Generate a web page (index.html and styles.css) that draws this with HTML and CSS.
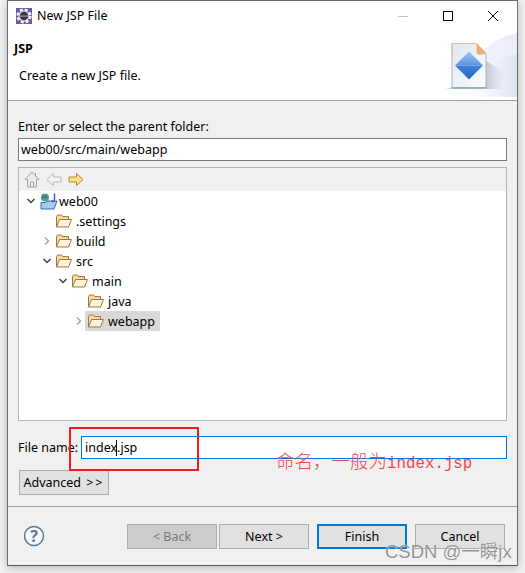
FILE: index.html
```html
<!DOCTYPE html>
<html lang="en">
<head>
    <meta charset="UTF-8">
    <title>New JSP File</title>
    <link rel="stylesheet" href="styles.css">
</head>
<body>
    <div class="window">
        <div class="titlebar">
            <svg class="appIcon" width="16" height="16" viewBox="0 0 16 16">
                <rect width="16" height="16" fill="#6c5c9e"/>
                <circle cx="8" cy="8" r="6.300" fill="none" stroke="#f2f2f2" stroke-width="2.600" stroke-dasharray="3 1.950"/>
                <circle cx="8" cy="8" r="5.400" fill="#f2f2f2"/>
                <circle cx="8" cy="8" r="4.400" fill="#3a3648"/>
                <rect x="3.800" y="7.400" width="8.400" height="1.400" fill="#8d88a8"/>
            </svg>
            <span class="titleText">New JSP File</span>
            <div class="winBtns">
                <svg width="10" height="10" viewBox="0 0 10 10"><path d="M0 5.500h10" stroke="#c4c4c4"/></svg>
                <svg width="10" height="10" viewBox="0 0 10 10"><rect x=".5" y=".5" width="9" height="9" fill="none" stroke="#000"/></svg>
                <svg width="10" height="10" viewBox="0 0 10 10"><path d="M0 0l10 10M10 0L0 10" stroke="#000" stroke-width="1"/></svg>
            </div>
        </div>
        <div class="banner">
            <div class="bannerText">
                <div class="bannerTitle">JSP</div>
                <div class="bannerDesc">Create a new JSP file.</div>
            </div>
            <svg class="bannerArt" width="75" height="68" viewBox="0 0 75 68">
                <defs>
                    <linearGradient id="wash" x1="0" y1="1" x2="1" y2="0">
                        <stop offset="0" stop-color="#fff"/>
                        <stop offset="1" stop-color="#e6ebf8"/>
                    </linearGradient>
                    <linearGradient id="wash2" x1="0" y1="0" x2="1" y2="0">
                        <stop offset="0" stop-color="#fff" stop-opacity="0"/>
                        <stop offset="1" stop-color="#dde4f5"/>
                    </linearGradient>
                    <linearGradient id="sheet" x1="0" y1="0" x2="1" y2="1">
                        <stop offset="0" stop-color="#dde7f3"/>
                        <stop offset="1" stop-color="#fbfcfe"/>
                    </linearGradient>
                    <linearGradient id="gemTop" x1="0" y1="0" x2="0" y2="1">
                        <stop offset="0" stop-color="#a4c6ee"/>
                        <stop offset="1" stop-color="#5b94e0"/>
                    </linearGradient>
                    <linearGradient id="gemBottom" x1="0" y1="0" x2="0" y2="1">
                        <stop offset="0" stop-color="#3f80dc"/>
                        <stop offset="1" stop-color="#2468c4"/>
                    </linearGradient>
                    <linearGradient id="shadow" x1="0" y1="0" x2="1" y2="0">
                        <stop offset="0" stop-color="#c8c4d2"/>
                        <stop offset="1" stop-color="#e2e2ee" stop-opacity=".4"/>
                    </linearGradient>
                </defs>
                <path d="M75 2C52 6 28 26 8 66h67z" fill="url(#wash)"/>
                <path d="M75 23C58 26 40 40 26 66h49z" fill="url(#wash2)"/>
                <path d="M3 58l8-2h33v2z" fill="#dcdce4"/>
                <path d="M44 30l17 10v18H44z" fill="url(#shadow)"/>
                <path d="M10 12.500h24.500l9.500 10v34H10z" fill="url(#sheet)" stroke="#a8bcbe"/>
                <path d="M10 12.500h25M10 12v12" stroke="#eabf86" stroke-width="1" fill="none"/>
                <path d="M9.500 57h35" stroke="#8fa9ac" stroke-width="1.500"/>
                <path d="M34.500 12l9.500 10.500-7 1.500-2.500-2z" fill="#eeb068"/>
                <path d="M13 34.500h28L27 48.500z" fill="url(#gemBottom)"/>
                <path d="M27 20.500l14 14H13z" fill="url(#gemTop)"/>
            </svg>
        </div>
        <div class="content">
            <div class="parentLabel">Enter or select the parent folder:</div>
            <div class="textBox">web00/src/main/webapp</div>
            <div class="treeBox">
                <div class="treeTools">
                    <svg width="16" height="17" viewBox="0 0 16 17"><path d="M8 1L1 8.500h2.500V16h9V8.500H15zM6.500 16v-5h3v5M11.500 2v3.500" fill="#ebebeb" stroke="#a4a4a4"/></svg>
                    <svg width="16" height="15" viewBox="0 0 16 15"><path d="M7.500 1.500L1 7.500l6.500 6v-3.500h7.500V5H7.500z" fill="#f4f4f4" stroke="#b8b8b8"/></svg>
                    <svg width="16" height="15" viewBox="0 0 16 15"><path d="M8.500 1.500l6.500 6-6.500 6v-3.500H1V5h7.500z" fill="#f9e08a" stroke="#b08a24"/></svg>
                </div>
                <ul class="tree">
                    <li class="row depth0">
                        <svg class="twisty" viewBox="0 0 10 10"><path d="M1.500 3L5 6.500 8.500 3" class="twistyOpen"/></svg>
                        <svg class="projIcon" width="18" height="17" viewBox="0 0 18 17">
                            <path d="M1 9.500h5l1-1.500h10l-3 8H1z" fill="#a9cdf0" stroke="#2f6db0"/>
                            <circle cx="5" cy="4.500" r="4" fill="#5aa070"/>
                            <path d="M2 2.500h5l1 2.500H4l-1.500 1z" fill="#3f76c4"/>
                            <path d="M14.500 .5v6.500c0 1.500-2 2-3 .800" fill="none" stroke="#3558a4" stroke-width="1.400"/>
                        </svg>
                        <span>web00</span>
                    </li>
                    <li class="row depth1">
                        <span class="twisty"></span>
                        <svg class="folder" viewBox="0 0 16 14"><use href="#folderShape"/></svg>
                        <span>.settings</span>
                    </li>
                    <li class="row depth1">
                        <svg class="twisty" viewBox="0 0 10 10"><path d="M3 1.500L6.500 5 3 8.500" class="twistyShut"/></svg>
                        <svg class="folder" viewBox="0 0 16 14"><use href="#folderShape"/></svg>
                        <span>build</span>
                    </li>
                    <li class="row depth1">
                        <svg class="twisty" viewBox="0 0 10 10"><path d="M1.500 3L5 6.500 8.500 3" class="twistyOpen"/></svg>
                        <svg class="folder" viewBox="0 0 16 14"><use href="#folderShape"/></svg>
                        <span>src</span>
                    </li>
                    <li class="row depth2">
                        <svg class="twisty" viewBox="0 0 10 10"><path d="M1.500 3L5 6.500 8.500 3" class="twistyOpen"/></svg>
                        <svg class="folder" viewBox="0 0 16 14"><use href="#folderShape"/></svg>
                        <span>main</span>
                    </li>
                    <li class="row depth3">
                        <span class="twisty"></span>
                        <svg class="folder" viewBox="0 0 16 14"><use href="#folderShape"/></svg>
                        <span>java</span>
                    </li>
                    <li class="row depth3">
                        <svg class="twisty" viewBox="0 0 10 10"><path d="M3 1.500L6.500 5 3 8.500" class="twistyShut"/></svg>
                        <div class="picked">
                            <svg class="folder" viewBox="0 0 16 14"><use href="#folderShape"/></svg>
                            <span>webapp</span>
                        </div>
                    </li>
                </ul>
            </div>
            <div class="nameRow">
                <label class="nameLabel">File name:</label>
                <div class="nameBox">index.jsp</div>
            </div>
            <div class="advancedRow"><button class="btn advanced">Advanced <span class="arrows">&gt;&gt;</span></button></div>
        </div>
        <div class="footer">
            <svg class="help" width="22" height="22" viewBox="0 0 22 22">
                <circle cx="11" cy="11" r="9.500" fill="#f6f8fb" stroke="#5f7896" stroke-width="1.500"/>
                <text x="11" y="16.500" text-anchor="middle" class="helpMark">?</text>
            </svg>
            <div class="footerBtns">
                <button class="btn disabled">&lt; Back</button>
                <button class="btn">Next &gt;</button>
                <button class="btn primary">Finish</button>
                <button class="btn">Cancel</button>
            </div>
        </div>
        <span class="caret"></span>
        <div class="redBox"></div>
        <div class="note">命名，一般为<span class="noteLatin">index.jsp</span></div>
        <div class="watermark">CSDN @一瞬jx</div>
    </div>

    <svg width="0" height="0" class="defs">
        <defs>
            <g id="folderShape">
                <path d="M.5 13V2.500l1-1.500h4l1 1.500h6v2.500" fill="#f6d9a4" stroke="#a8763a"/>
                <path d="M.5 13l3-7.500h12l-3 7.500z" fill="#fdf3dc" stroke="#a8763a"/>
            </g>
        </defs>
    </svg>
</body>
</html>
```

FILE: styles.css
```css
* {
    box-sizing: border-box;
}
body {
    margin: 0;
    height: 573px;
    overflow: hidden;
    background-color: #f2f2f2;
    font-family: "Noto Sans", "Open Sans", sans-serif;
    font-size: 12.5px;
    color: #000;
}
.defs {
    position: absolute;
}
.window {
    position: relative;
    width: 511px;
    height: 566px;
    margin-left: 7px;
    background-color: #f0f0f0;
    border: 1px solid #6e6e6e;
    border-bottom-color: #555;
    box-shadow: 0 2px 8px rgba(0, 0, 0, .25);
    display: flex;
    flex-direction: column;
}

/* title bar */
.titlebar {
    height: 29px;
    background-color: #fff;
    display: flex;
    align-items: center;
    padding-left: 8px;
}
.titleText {
    margin-left: 5px;
}
.winBtns {
    margin-left: auto;
    display: flex;
    gap: 35px;
    padding-right: 19px;
}
.winBtns svg {
    display: block;
}

/* banner */
.banner {
    height: 71px;
    background-color: #fff;
    border-bottom: 1px solid #a0a0a0;
    display: flex;
    justify-content: space-between;
    align-items: flex-end;
}
.bannerText {
    align-self: flex-start;
    padding-left: 6px;
}
.bannerTitle {
    font-weight: bold;
    line-height: 17px;
    margin-top: 10px;
}
.bannerDesc {
    margin: 10px 0 0 5px;
    line-height: 17px;
}
.bannerArt {
    display: block;
    margin-bottom: 1px;
}

/* main part */
.content {
    height: 406px;
    padding: 17px 10px 0 10px;
    border-bottom: 1px solid #a0a0a0;
}
.parentLabel {
    line-height: 17px;
    margin-bottom: 3px;
}
.textBox {
    height: 23px;
    border: 1px solid #7a7a7a;
    background-color: #fff;
    line-height: 21px;
    padding-left: 2px;
}
.treeBox {
    height: 254px;
    margin-top: 6px;
    border: 1px solid #b4b4b4;
    background-color: #fff;
}
.treeTools {
    height: 23px;
    background-color: #f0f0f0;
    display: flex;
    align-items: center;
    gap: 6px;
    padding-left: 5px;
}
.tree {
    list-style: none;
    margin: 0;
    padding: 0;
}
.row {
    height: 20px;
    display: flex;
    align-items: center;
}
.depth0 {
    padding-left: 7px;
}
.depth1 {
    padding-left: 23px;
}
.depth2 {
    padding-left: 39px;
}
.depth3 {
    padding-left: 55px;
}
.twisty {
    width: 10px;
    height: 10px;
    flex: none;
    margin-right: 4px;
}
.twistyOpen {
    fill: none;
    stroke: #444;
    stroke-width: 1.500;
}
.twistyShut {
    fill: none;
    stroke: #a8a8a8;
    stroke-width: 1.500;
}
.projIcon {
    margin-right: 1px;
}
.folder {
    width: 16px;
    height: 14px;
    flex: none;
    margin-right: 4px;
}
.picked {
    height: 20px;
    display: flex;
    align-items: center;
    background-color: #d9d9d9;
    margin-left: -3px;
    padding: 0 5px 0 3px;
}
.nameRow {
    display: flex;
    align-items: center;
    margin-top: 15px;
}
.nameLabel {
    width: 63px;
}
.nameBox {
    flex: 1;
    height: 23px;
    border: 1px solid #0078d7;
    background-color: #fff;
    line-height: 21px;
    padding-left: 3px;
}
.advancedRow {
    margin-top: 11px;
    padding-left: 1px;
}
.arrows {
    letter-spacing: 2px;
    margin-left: 2px;
}

/* buttons */
.btn {
    width: 90px;
    height: 25px;
    border: 1px solid #adadad;
    background-color: #e1e1e1;
    font-family: inherit;
    font-size: 12.5px;
    color: #000;
    padding: 0;
}
.disabled {
    background-color: #cccccc;
    color: #7a7a7a;
}
.primary {
    border: 2px solid #0078d7;
}
.footer {
    flex: 1;
    display: flex;
    align-items: flex-start;
    padding: 17px 12px 0 15px;
}
.help {
    margin-top: 1px;
}
.helpMark {
    font-size: 16px;
    font-weight: bold;
    fill: #5f7896;
}
.footerBtns {
    margin-left: auto;
    display: flex;
    gap: 2px;
}
.footerBtns .primary {
    margin-left: 6px;
    margin-right: 6px;
}

/* things drawn over the dialog */
.caret {
    position: absolute;
    left: 108px;
    top: 439px;
    width: 1px;
    height: 16px;
    background-color: #000;
}
.redBox {
    position: absolute;
    left: 61px;
    top: 426px;
    width: 130px;
    height: 44px;
    border: 2px solid #f01c22;
}
.note {
    position: absolute;
    left: 268px;
    top: 447px;
    color: #f8444c;
    font-family: "Noto Sans CJK SC", sans-serif;
    font-weight: 300;
    font-size: 18.500px;
    line-height: 24px;
    white-space: nowrap;
}
.noteLatin {
    font-family: "Liberation Mono", monospace;
    font-size: 15.800px;
    font-weight: normal;
}
.watermark {
    position: absolute;
    left: 377px;
    top: 539px;
    color: rgba(120, 120, 120, .8);
    font-family: "Liberation Sans", "Noto Sans CJK SC", sans-serif;
    font-size: 18.500px;
    line-height: 24px;
    white-space: nowrap;
    text-shadow: 0 0 1px #fff;
}
```
